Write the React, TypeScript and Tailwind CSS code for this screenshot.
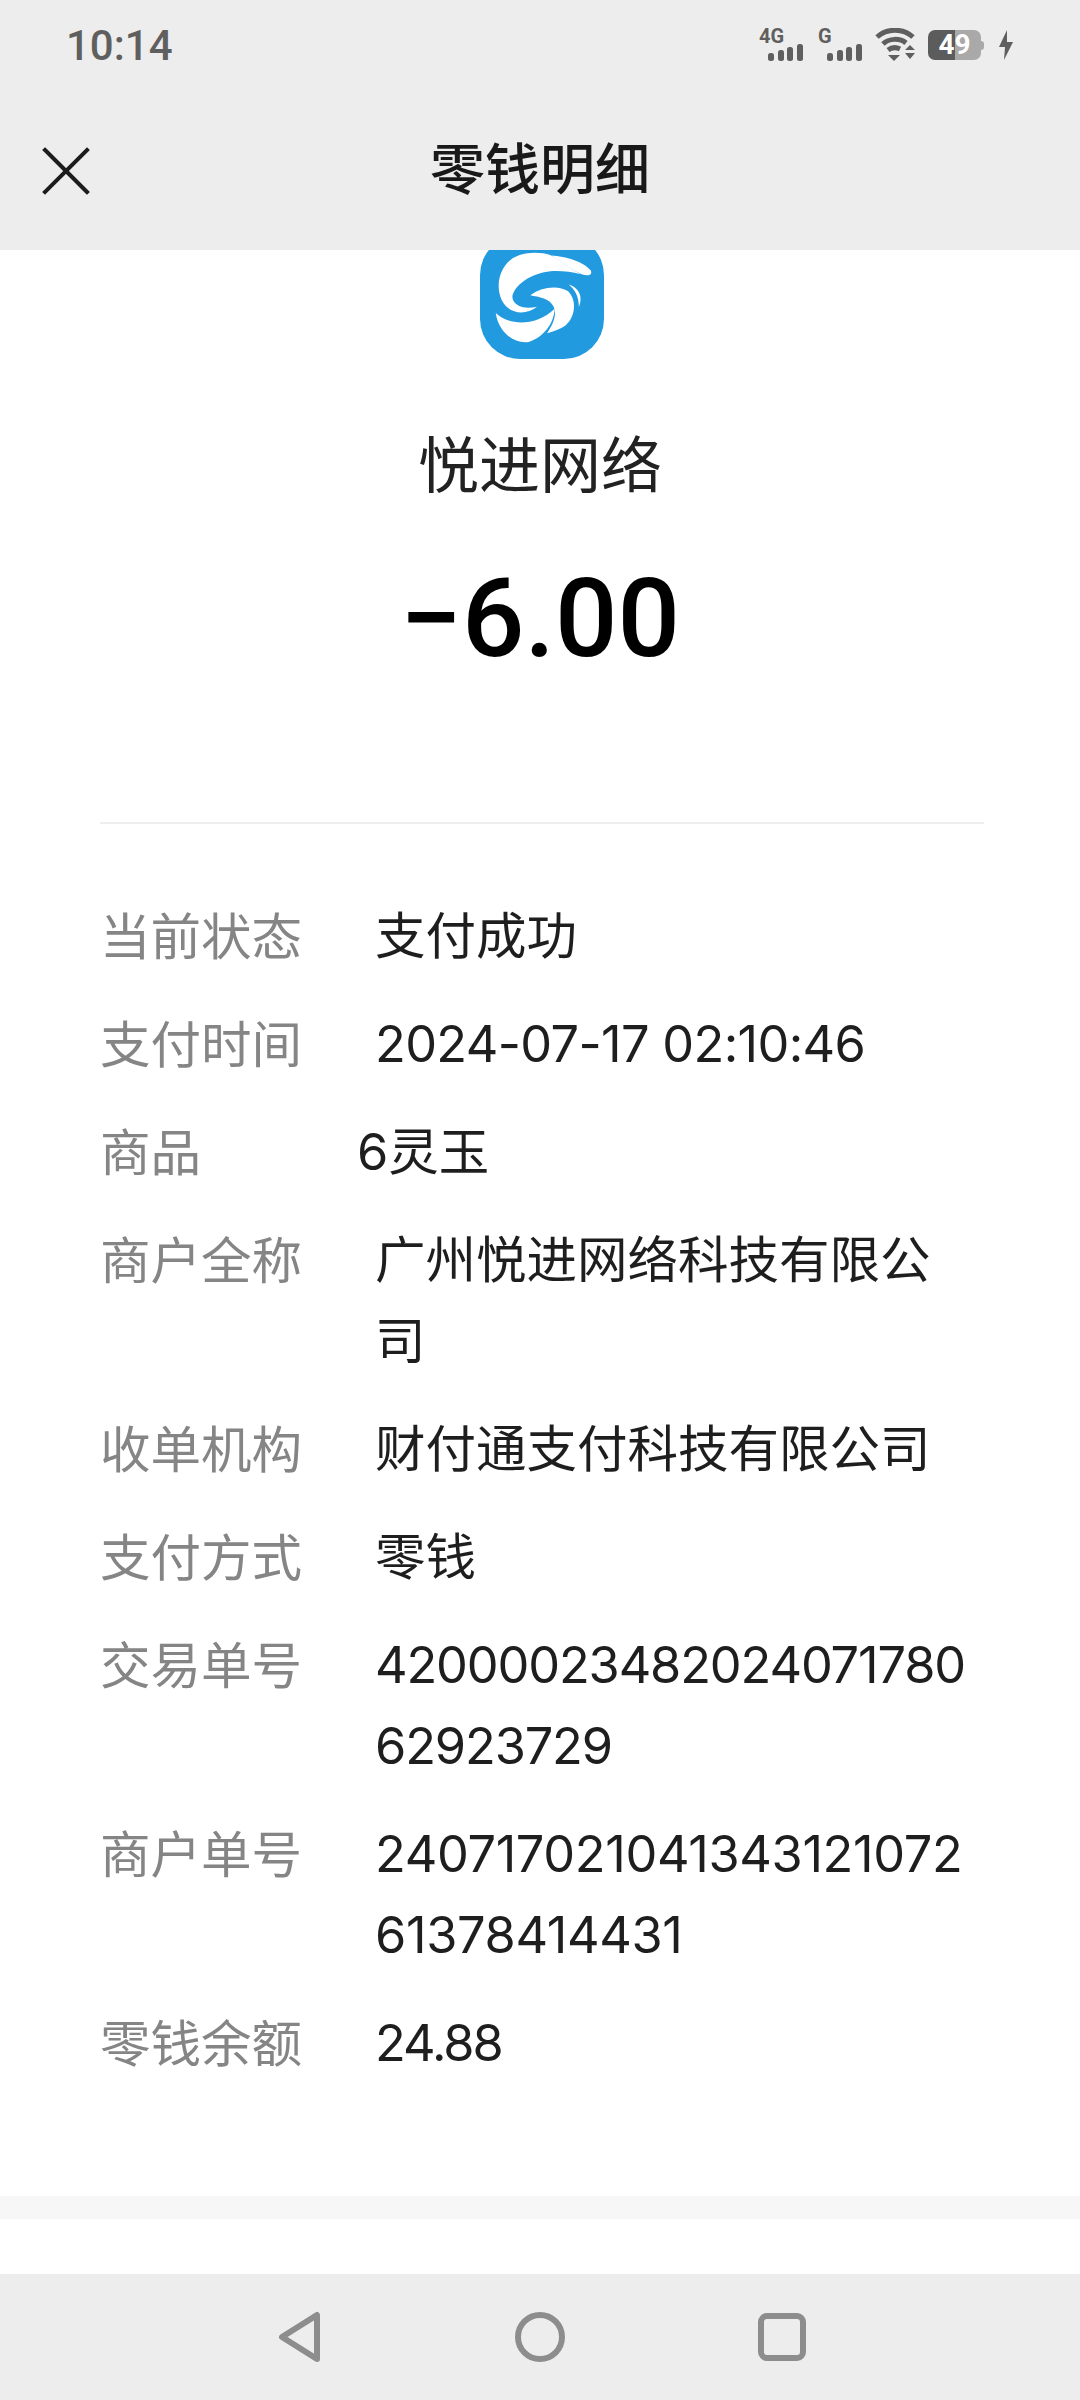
const ROWS: { label: string; value: string; shift?: boolean; tracking?: string }[] = [
  { label: '当前状态', value: '支付成功' },
  { label: '支付时间', value: '2024-07-17 02:10:46', tracking: 'tracking-[-0.65px]' },
  { label: '商品', value: '6灵玉', shift: true },
  { label: '商户全称', value: '广州悦进网络科技有限公司' },
  { label: '收单机构', value: '财付通支付科技有限公司' },
  { label: '支付方式', value: '零钱' },
  { label: '交易单号', value: '4200002348202407178062923729', tracking: 'tracking-[-1.15px]' },
  { label: '商户单号', value: '24071702104134312107261378414431', tracking: 'tracking-[-0.35px]' },
  { label: '零钱余额', value: '24.88', tracking: 'tracking-[-2px]' },
]

function Signal({ label }: { label: string }) {
  return (
    <div className="flex w-[44px] flex-col items-start">
      <span className="h-[15px] text-[20px] leading-[15px] font-bold text-[#5f5f5f]">{label}</span>
      <svg width="36" height="18" viewBox="0 0 36 18" className="ml-[9px]" fill="#5f5f5f">
        <rect x="0" y="9" width="6" height="8" rx="2.5" />
        <rect x="10" y="6" width="6" height="11" rx="2.5" />
        <rect x="19" y="3" width="6" height="14" rx="2.5" />
        <rect x="29" y="0" width="6" height="17" rx="2.5" />
      </svg>
    </div>
  )
}

function StatusBar() {
  return (
    <div className="flex h-[90px] items-center justify-between px-[66px] font-['Roboto',sans-serif]">
      <span className="pt-[2px] text-[42px] leading-none font-medium text-[#5f5f5f]">10:14</span>
      <div className="flex items-center">
        <Signal label="4G" />
        <div className="ml-[15px]">
          <Signal label="G" />
        </div>
        <svg width="42" height="34" viewBox="0 0 42 34" className="ml-[13px]" fill="none" stroke="#5f5f5f" strokeWidth="5">
          <path d="M2 9C12 0 28 0 38 9" />
          <path d="M8 16C14 10 25 10 31 15" />
          <path d="M13 22C17 19 21 19 25 21" />
          <path d="M13 27L25 27L19 33Z" fill="#5f5f5f" stroke="none" />
          <path d="M30 22L35 17L40 22Z M30 25L40 25L35 31Z" fill="#5f5f5f" stroke="none" />
        </svg>
        <div className="ml-[11px] flex items-center">
          <span className="flex h-[30px] w-[53px] items-center justify-center rounded-[7px] bg-[linear-gradient(90deg,#5c5c5c_50%,#a9a9a9_50%)] text-[28px] leading-none font-bold text-white">
            49
          </span>
          <span className="h-[9px] w-[3px] rounded-r-sm bg-[#a9a9a9]" />
        </div>
        <svg width="16" height="30" viewBox="0 0 16 30" className="ml-[14px]" fill="#5f5f5f">
          <path d="M9 0L1 17L7 17L6 30L15 12L9 12Z" />
        </svg>
      </div>
    </div>
  )
}

function Logo() {
  return (
    <svg width="124" height="124" viewBox="15 -30 370 370" className="ml-[3px] block">
      <rect x="15" y="-30" width="370" height="370" rx="120" fill="#219ae0" />
      <g fill="#fff">
        <path d="M315 87C285 78 250 76 225 78C175 84 125 110 112 150C108 175 140 195 185 184C150 212 100 205 80 165C62 125 70 75 105 45C135 20 190 18 225 30C260 50 285 72 315 87Z" />
        <path d="M228 31C270 33 325 50 345 75C352 88 340 94 318 87C290 75 260 52 228 31Z" />
        <path d="M62 203C100 240 180 245 238 190C235 235 205 275 160 289C115 295 70 260 62 203Z" />
        <path d="M165 150C195 125 250 118 278 138C305 165 300 215 270 240C255 250 235 258 215 263C235 235 245 205 235 185C225 160 190 155 165 150Z" />
        <path d="M280 118C305 125 325 150 310 185C310 155 300 135 280 118Z" />
      </g>
    </svg>
  )
}

function NavBar() {
  return (
    <div className="flex h-[126px] items-center justify-center gap-[193px] bg-[#ededed] pl-[3px]">
      <svg width="44" height="52" viewBox="0 0 44 52" fill="none" stroke="#8d8d8d" strokeWidth="6" strokeLinejoin="round">
        <path d="M39 4V48L4 26Z" />
      </svg>
      <svg width="50" height="50" viewBox="0 0 50 50" fill="none" stroke="#8d8d8d" strokeWidth="6">
        <circle cx="25" cy="25" r="22" />
      </svg>
      <svg width="48" height="48" viewBox="0 0 48 48" fill="none" stroke="#8d8d8d" strokeWidth="6">
        <rect x="3" y="3" width="42" height="42" rx="6" />
      </svg>
    </div>
  )
}

export default function App() {
  return (
    <div className="flex h-[2400px] w-[1080px] flex-col overflow-hidden bg-white font-['Noto_Sans','Noto_Sans_CJK_SC',sans-serif]">
      <header className="h-[250px] shrink-0 bg-[#ededed]">
        <StatusBar />
        <div className="relative flex h-[160px] items-start justify-center pt-[38px]">
          <svg width="48" height="48" viewBox="0 0 48 48" className="absolute top-[57px] left-[42px]" stroke="#1c1c1c" strokeWidth="4" strokeLinecap="square">
            <path d="M3 3L45 45M45 3L3 45" />
          </svg>
          <h1 className="text-[55px] leading-[80px] font-medium text-[#191919]">零钱明细</h1>
        </div>
      </header>

      <main className="min-h-0 flex-1 overflow-hidden">
        <div className="-mt-[15px] flex justify-center">
          <Logo />
        </div>
        <p className="mt-[61px] text-center text-[61px] leading-[90px] text-[#222]">悦进网络</p>
        <p className="mt-[49px] text-center font-['Roboto',sans-serif] text-[110px] leading-[120px] font-medium text-black">−6.00</p>

        <div className="mt-[143px] mr-[96px] ml-[100px] border-t-2 border-[#eeeeee] pt-[71px]">
          <dl className="flex flex-col gap-[27px]">
            {ROWS.map((row) => (
              <div key={row.label} className="flex text-[50.5px] leading-[81px]">
                <dt className="w-[275px] shrink-0 text-[#858585]">{row.label}</dt>
                <dd
                  className={`w-[598px] break-all font-['Inter','Noto_Sans_CJK_SC',sans-serif] text-[#1e1e1e] ${row.shift ? '-ml-[18px]' : ''} ${row.tracking ?? ''}`}
                >
                  {row.value}
                </dd>
              </div>
            ))}
          </dl>
        </div>

        <div className="mt-[113px] h-[23px] bg-[#f7f7f7]" />
      </main>

      <NavBar />
    </div>
  )
}
